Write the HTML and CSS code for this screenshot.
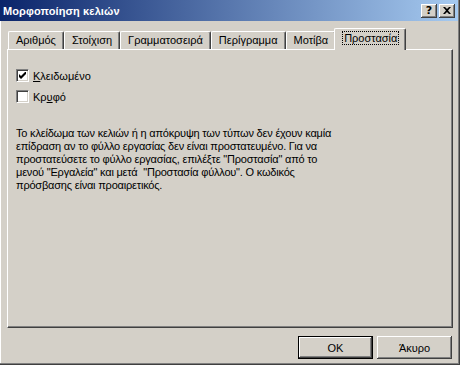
FILE: index.html
```html
<!DOCTYPE html>
<html lang="el">
<head>
    <meta charset="UTF-8" />
    <title>Μορφοποίηση κελιών</title>
    <link rel="stylesheet" href="styles.css">
</head>
<body>
    <div class="window">
        <div class="titlebar">
            <span class="title">Μορφοποίηση κελιών</span>
            <div class="title-btns">
                <button class="cap-btn">?</button>
                <button class="cap-btn">
                    <svg width="8" height="7" viewBox="0 0 8 7"><path d="M0 0h2l2 2 2-2h2L5 3.5 8 7H6L4 5 2 7H0l3-3.5z" fill="#000"/></svg>
                </button>
            </div>
        </div>
        <div class="body">
            <div class="tabs">
                <div class="tab">Αριθμός</div>
                <div class="tab">Στοίχιση</div>
                <div class="tab">Γραμματοσειρά</div>
                <div class="tab">Περίγραμμα</div>
                <div class="tab">Μοτίβα</div>
                <div class="tab active"><span class="focus">Προστασία</span></div>
            </div>
            <div class="panel">
                <label class="check">
                    <span class="box">
                        <svg width="7" height="7" viewBox="0 0 7 7"><path d="M0 2v3l2 2 5-5V-1L2 4z" fill="#000"/></svg>
                    </span>
                    <span><u>Κ</u>λειδωμένο</span>
                </label>
                <label class="check">
                    <span class="box"></span>
                    <span>Κρ<u>υ</u>φό</span>
                </label>
                <p class="note">Το κλείδωμα των κελιών ή η απόκρυψη των τύπων δεν έχουν καμία<br>
                    επίδραση αν το φύλλο εργασίας δεν είναι προστατευμένο. Για να<br>
                    προστατεύσετε το φύλλο εργασίας, επιλέξτε "Προστασία" από το<br>
                    μενού "Εργαλεία" και μετά &nbsp;"Προστασία φύλλου". Ο κωδικός<br>
                    πρόσβασης είναι προαιρετικός.</p>
            </div>
            <div class="actions">
                <button class="btn default">OK</button>
                <button class="btn">Άκυρο</button>
            </div>
        </div>
    </div>
</body>
</html>
```

FILE: styles.css
```css
* {
    box-sizing: border-box;
}
body {
    margin: 0;
    font-family: Tahoma, "Liberation Sans", Arial, sans-serif;
    font-size: 11px;
    color: #000;
    background: #d4d0c8;
}
.window {
    width: 460px;
    height: 365px;
    background: #d4d0c8;
    border-right: 1px solid #404040;
    border-bottom: 1px solid #404040;
    box-shadow: inset -1px -1px 0 #808080, inset 1px 0 0 #ffffff;
    display: flex;
    flex-direction: column;
}
.titlebar {
    height: 21px;
    margin-right: 1px;
    background: linear-gradient(to right, #0a246a, #a6caf0);
    display: flex;
    align-items: center;
    justify-content: space-between;
    padding: 0 3px 0 3px;
}
.title {
    color: #fff;
    font-weight: bold;
    font-size: 11px;
    letter-spacing: 0.1px;
}
.title-btns {
    display: flex;
    gap: 2px;
}
.cap-btn {
    width: 16px;
    height: 14px;
    padding: 0;
    background: #d4d0c8;
    border: none;
    box-shadow: inset -1px -1px 0 #404040, inset 1px 1px 0 #fff, inset -2px -2px 0 #808080;
    font-family: "DejaVu Sans", sans-serif;
    font-weight: bold;
    font-size: 11px;
    line-height: 14px;
    display: flex;
    align-items: center;
    justify-content: center;
}
.body {
    flex: 1;
    padding: 7px 6px 0 7px;
    display: flex;
    flex-direction: column;
}
.tabs {
    display: flex;
    align-items: flex-end;
    height: 21px;
    padding-left: 1px;
    position: relative;
    z-index: 1;
}
.tab {
    height: 18px;
    padding: 2px 7px 0 7px;
    border-top: 1px solid #fff;
    border-left: 1px solid #fff;
    border-right: 1px solid #404040;
    border-radius: 2px 2px 0 0;
    box-shadow: inset -1px 0 0 #808080;
    white-space: nowrap;
}
.tab.active {
    margin: 0 -2px -1px -2px;
    padding: 3px 7px 0 8px;
    background: #d4d0c8;
    height: 22px;
}
.focus {
    outline: 1px dotted #000;
    padding: 0 1px;
}
.panel {
    height: 279px;
    border-top: 1px solid #fff;
    border-left: 1px solid #fff;
    border-right: 1px solid #404040;
    border-bottom: 1px solid #404040;
    box-shadow: inset -1px -1px 0 #808080;
    padding: 19px 8px 0 8px;
}
.check {
    display: flex;
    align-items: center;
    gap: 4px;
    height: 13px;
    margin-bottom: 8px;
}
.box {
    width: 13px;
    height: 13px;
    background: #fff;
    border-top: 1px solid #808080;
    border-left: 1px solid #808080;
    border-right: 1px solid #fff;
    border-bottom: 1px solid #fff;
    box-shadow: inset 1px 1px 0 #404040, inset -1px -1px 0 #d4d0c8;
    display: flex;
    align-items: center;
    justify-content: center;
}
.note {
    margin: 24px 0 0 0;
    line-height: 13px;
    letter-spacing: -0.2px;
    white-space: nowrap;
}
.actions {
    display: flex;
    justify-content: flex-end;
    gap: 4px;
    padding: 8px 1px 0 0;
}
.btn {
    width: 75px;
    height: 23px;
    padding: 0;
    font-family: inherit;
    font-size: 11px;
    background: #d4d0c8;
    border: none;
    box-shadow: inset -1px -1px 0 #404040, inset 1px 1px 0 #fff, inset -2px -2px 0 #808080;
}
.btn.default {
    border: 1px solid #000;
}
```
